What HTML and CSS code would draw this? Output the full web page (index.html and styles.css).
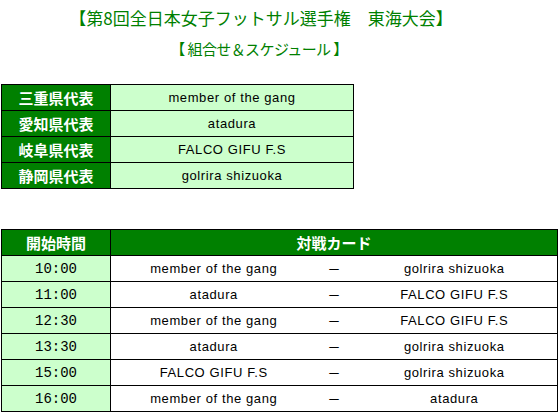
FILE: index.html
```html
<!DOCTYPE html>
<html lang="ja">
<head>
<meta charset="utf-8">
<link rel="stylesheet" href="styles.css">
</head>
<body>
<h1 class="title">【第8回全日本女子フットサル選手権　東海大会】</h1>
<h2 class="subtitle">【 組合せ＆スケジュール 】</h2>

<table class="reps">
  <colgroup><col class="c-pref"><col class="c-team"></colgroup>
  <tr><th>三重県代表</th><td>member of the gang</td></tr>
  <tr><th>愛知県代表</th><td>atadura</td></tr>
  <tr><th>岐阜県代表</th><td>FALCO GIFU F.S</td></tr>
  <tr><th>静岡県代表</th><td>golrira shizuoka</td></tr>
</table>

<table class="sched">
  <colgroup><col class="c-time"><col class="c-home"><col class="c-vs"><col class="c-away"></colgroup>
  <tr class="head"><th>開始時間</th><th colspan="3">対戦カード</th></tr>
  <tr><td class="time">10:00</td><td class="home">member of the gang</td><td class="vs">－</td><td class="away">golrira shizuoka</td></tr>
  <tr><td class="time">11:00</td><td class="home">atadura</td><td class="vs">－</td><td class="away">FALCO GIFU F.S</td></tr>
  <tr><td class="time">12:30</td><td class="home">member of the gang</td><td class="vs">－</td><td class="away">FALCO GIFU F.S</td></tr>
  <tr><td class="time">13:30</td><td class="home">atadura</td><td class="vs">－</td><td class="away">golrira shizuoka</td></tr>
  <tr><td class="time">15:00</td><td class="home">FALCO GIFU F.S</td><td class="vs">－</td><td class="away">golrira shizuoka</td></tr>
  <tr><td class="time">16:00</td><td class="home">member of the gang</td><td class="vs">－</td><td class="away">atadura</td></tr>
</table>
</body>
</html>
```

FILE: styles.css
```css
html, body {
  margin: 0;
  padding: 0;
  background: #ffffff;
}
body {
  font-family: "Noto Sans CJK JP", "Liberation Sans", sans-serif;
  color: #000;
}
.title {
  margin: 8px 0 0 0;
  padding-right: 37px;
  font-size: 17px;
  line-height: 20px;
  font-weight: normal;
  color: #008000;
  text-align: center;
}
.subtitle {
  margin: 11px 0 0 0;
  padding-right: 41px;
  font-size: 15px;
  letter-spacing: -0.6px;
  line-height: 20px;
  font-weight: normal;
  color: #008000;
  text-align: center;
}
table {
  border-collapse: collapse;
  table-layout: fixed;
  margin-left: 1px;
}
th, td {
  border: 1px solid #000;
  height: 25px;
  padding: 0;
  text-align: center;
  vertical-align: middle;
}
th {
  background: #008000;
  color: #fff;
  font-family: "Noto Sans CJK JP", sans-serif;
  font-weight: bold;
  font-size: 15px;
  line-height: 18px;
}
td {
  font-family: "Liberation Sans", "Noto Sans CJK JP", sans-serif;
  font-size: 13px;
  letter-spacing: 0.6px;
  line-height: 16px;
}
.reps {
  margin-top: 25px;
  width: 353px;
}
.reps td { background: #ccffcc; }
.c-pref, .c-time { width: 109px; }
.sched {
  margin-top: 40px;
  width: 557px;
}
.c-vs { width: 35px; }
.sched .time {
  background: #ccffcc;
  font-family: "Liberation Mono", monospace;
  font-size: 14px;
  letter-spacing: 0;
}
.sched .home { border-right: none; }
.sched .vs { border-left: none; border-right: none; font-family: "Noto Sans CJK JP", sans-serif; letter-spacing: 0; }
.sched .away { border-left: none; }
```
